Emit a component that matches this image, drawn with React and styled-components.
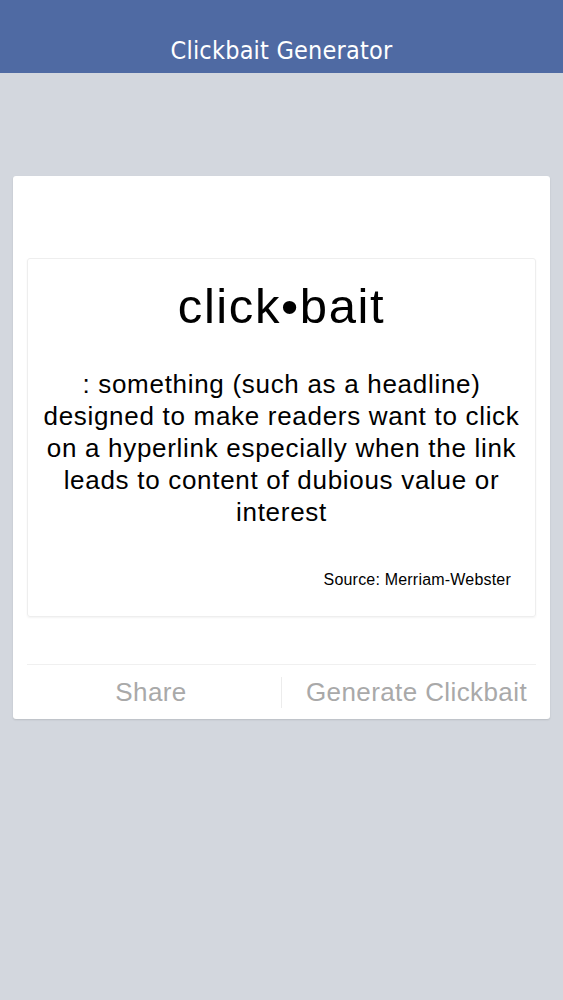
import React from "react";
import styled, { createGlobalStyle } from "styled-components";

const GlobalStyle = createGlobalStyle`
  html, body {
    margin: 0;
    padding: 0;
    background: #d3d7de;
  }
  body {
    font-family: "Liberation Sans", Arial, sans-serif;
  }
`;

/// PAGE
const Page = styled.div`
  min-height: 1000px;
  background: #d3d7de;
`;

const TopBar = styled.header`
  height: 73px;
  background: #4f6aa3;
  display: flex;
  align-items: flex-end;
  justify-content: center;
  padding-bottom: 8px;
  box-sizing: border-box;
`;

const BarTitle = styled.h1`
  margin: 0;
  font-family: "DejaVu Sans Condensed", "DejaVu Sans", sans-serif;
  font-size: 25px;
  font-weight: normal;
  color: #ffffff;
  letter-spacing: 0.2px;
`;

const Content = styled.main`
  padding: 103px 13px 0;
`;

/// CARD
const Card = styled.section`
  background: #ffffff;
  border-radius: 3px;
  box-shadow: 0 1px 2px rgba(0, 0, 0, 0.12);
  padding: 82px 14px 0;
`;

const Definition = styled.article`
  border: 1px solid #eeeeee;
  border-radius: 3px;
  box-shadow: 0 1px 2px rgba(0, 0, 0, 0.05);
  padding: 20px 10px 27px;
  text-align: center;
  color: #000000;
`;

const Word = styled.h2`
  margin: 0;
  font-size: 49px;
  font-weight: normal;
  line-height: 54px;
  letter-spacing: 1.6px;
`;

const Meaning = styled.p`
  margin: 35px 0 0;
  font-size: 26px;
  line-height: 32px;
  letter-spacing: 0.7px;
  white-space: nowrap;
`;

const Source = styled.p`
  margin: 43px 14px 0 0;
  font-size: 16px;
  letter-spacing: 0.2px;
  text-align: right;
`;

const Actions = styled.div`
  margin-top: 47px;
  border-top: 1px solid #f0f0f0;
  height: 54px;
  display: grid;
  grid-template-columns: 248px 1fr;
  align-items: center;
`;

const Action = styled.button`
  height: 100%;
  border: 0;
  background: none;
  padding: 0 0 0 ${(p) => (p.$divider ? "22px" : "0")};
  font-family: "Liberation Sans", Arial, sans-serif;
  font-size: 26px;
  letter-spacing: 0.4px;
  color: #a9a9a9;
  text-align: center;
  white-space: nowrap;
  position: relative;
  ${(p) =>
    p.$divider &&
    `
    &::before {
      content: "";
      position: absolute;
      left: 6px;
      top: 12px;
      bottom: 11px;
      border-left: 1px solid #ececec;
    }
  `}
`;

export default function App() {
  return (
    <>
      <GlobalStyle />
      <Page>
        <TopBar>
          <BarTitle>Clickbait Generator</BarTitle>
        </TopBar>
        <Content>
          <Card>
            <Definition>
              <Word>click•bait</Word>
              <Meaning>
                : something (such as a headline)
                <br />
                designed to make readers want to click
                <br />
                on a hyperlink especially when the link
                <br />
                leads to content of dubious value or
                <br />
                interest
              </Meaning>
              <Source>Source: Merriam-Webster</Source>
            </Definition>
            <Actions>
              <Action>Share</Action>
              <Action $divider>Generate Clickbait</Action>
            </Actions>
          </Card>
        </Content>
      </Page>
    </>
  );
}
